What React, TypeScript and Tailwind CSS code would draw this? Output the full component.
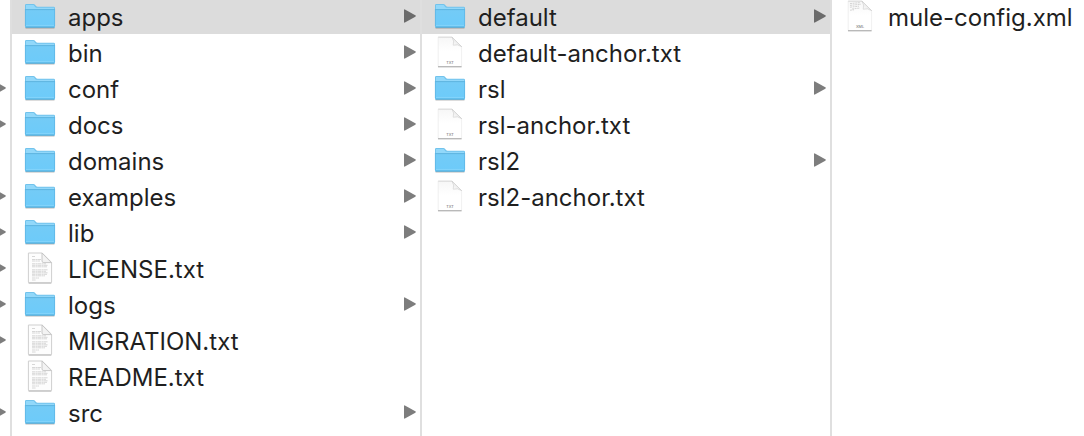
import React from "react";
import clsx from "clsx";

type Kind = "folder" | "page" | "txt" | "xml";
type Entry = { name: string; kind: Kind; selected?: boolean };

const parentArrows = [false, false, true, true, false, true, true, true, true, true, false, true];

const root: Entry[] = [
  { name: "apps", kind: "folder", selected: true },
  { name: "bin", kind: "folder" },
  { name: "conf", kind: "folder" },
  { name: "docs", kind: "folder" },
  { name: "domains", kind: "folder" },
  { name: "examples", kind: "folder" },
  { name: "lib", kind: "folder" },
  { name: "LICENSE.txt", kind: "page" },
  { name: "logs", kind: "folder" },
  { name: "MIGRATION.txt", kind: "page" },
  { name: "README.txt", kind: "page" },
  { name: "src", kind: "folder" },
];

const apps: Entry[] = [
  { name: "default", kind: "folder", selected: true },
  { name: "default-anchor.txt", kind: "txt" },
  { name: "rsl", kind: "folder" },
  { name: "rsl-anchor.txt", kind: "txt" },
  { name: "rsl2", kind: "folder" },
  { name: "rsl2-anchor.txt", kind: "txt" },
];

const defaultApp: Entry[] = [{ name: "mule-config.xml", kind: "xml" }];

function Defs() {
  return (
    <svg className="absolute size-0" aria-hidden="true">
      <defs>
        <linearGradient id="folder-front" x1="0" y1="0" x2="0" y2="1">
          <stop offset="0" stopColor="#74cbf6" />
          <stop offset="1" stopColor="#6ccbfa" />
        </linearGradient>
        <linearGradient id="paper" x1="0" y1="0" x2="0" y2="1">
          <stop offset="0" stopColor="#f7f7f7" />
          <stop offset="0.5" stopColor="#ffffff" />
          <stop offset="1" stopColor="#ffffff" />
        </linearGradient>
        <linearGradient id="curl" x1="0" y1="1" x2="1" y2="0">
          <stop offset="0" stopColor="#ffffff" />
          <stop offset="1" stopColor="#dcdcdc" />
        </linearGradient>
      </defs>
    </svg>
  );
}

function FolderIcon() {
  return (
    <svg viewBox="0 0 32 32" className="size-8" aria-hidden="true">
      <path d="M1.5 28h29" stroke="#000" strokeOpacity="0.2" strokeWidth="1.4" />
      <path
        d="M1 5.2Q1 4 2.2 4H9.4Q10.4 4 11 4.8L12 6.1Q12.6 6.8 13.6 6.8H29.8Q31 6.8 31 8V25H1Z"
        fill="#72c3ec"
      />
      <path d="M2 5H9.6L11.4 7.2Q12 7.8 13 7.8H30V9.4H2Z" fill="#92d8fa" />
      <path d="M1 9.4H31V26.2Q31 27.6 29.8 27.6H2.2Q1 27.6 1 26.2Z" fill="url(#folder-front)" />
      <path d="M1 9.6H31" stroke="#57aedb" strokeWidth="0.8" />
      <path d="M1.4 9V26M30.6 9V26" stroke="#5db5e3" strokeWidth="0.8" />
      <path d="M2 25.4H30" stroke="#8ad6fb" strokeWidth="0.8" />
      <path d="M1.4 27.2H30.6" stroke="#4a9fca" strokeWidth="0.9" />
    </svg>
  );
}

function PageIcon() {
  return (
    <svg viewBox="0 0 32 32" className="size-8" aria-hidden="true">
      <path d="M4.5 1H18.2L27.6 10.4V30Q27.6 30.8 26.8 30.8H5.2Q4.4 30.8 4.4 30V1Z" fill="#fdfdfd" stroke="#cfcfcf" />
      <path d="M4.6 31.1H27.4" stroke="#b5b5b5" strokeWidth="0.9" />
      <path d="M18 1V9Q18 10.6 19.8 10.6H27.4Z" fill="#f3f3f3" stroke="#c3c3c3" strokeWidth="0.9" />
      <path
        d="M8 4.5h3M8 7.5h9M8 9h8M8 11.8h14M8 13.3h16M8 14.8h15M8 17.8h16M8 19.3h14M8 20.8h16M8 22.3h15M8 23.8h13M8 26h7M8 28h4"
        stroke="#cdcdcd"
        strokeWidth="0.8"
        strokeDasharray="3.2 0.4 2.1 0.3"
      />
    </svg>
  );
}

function TypedIcon({ label }: { label: "TXT" | "XML" }) {
  return (
    <svg viewBox="0 0 32 32" className="size-8" aria-hidden="true">
      <path d="M4.2 1H18L27.6 10.6V30.6H4.2Z" fill="url(#paper)" stroke="#ececec" strokeWidth="0.8" />
      <path d="M4.2 1.2H18L27.6 10.6" fill="none" stroke="#d0d0d0" strokeWidth="0.7" />
      <path d="M18 1.2Q20.6 5 19.2 9.2Q23.6 7.8 27.6 10.6Z" fill="url(#curl)" stroke="#cdcdcd" strokeWidth="0.6" />
      <path d="M4 30.8H27.6" stroke="#989898" strokeWidth="0.9" />
      {label === "XML" && (
        <path
          d="M6 3.6l10-1M6 5.4l11-1.2M6 7.2l9-1M8 9l8-1M6 10.2l4-.4"
          stroke="#c4c4c4"
          strokeWidth="0.7"
          strokeDasharray="2 0.6"
        />
      )}
      <text
        x="16"
        y="28"
        textAnchor="middle"
        className="fill-[#666666] font-['Liberation_Sans',sans-serif] text-[4px]"
      >
        {label}
      </text>
    </svg>
  );
}

function EntryIcon({ kind }: { kind: Kind }) {
  if (kind === "folder") return <FolderIcon />;
  if (kind === "page") return <PageIcon />;
  return <TypedIcon label={kind === "txt" ? "TXT" : "XML"} />;
}

function Arrow({ dark }: { dark?: boolean }) {
  return (
    <svg
      viewBox="0 0 12 14"
      className={clsx("h-3.5 w-3 shrink-0", dark ? "fill-[#6b6b6b]" : "fill-[#7d7d7d]")}
      aria-hidden="true"
    >
      <path d="M0 0.9Q0 0 0.9 0.4L11.3 6.3Q12.3 7 11.3 7.7L0.9 13.6Q0 14 0 13.1Z" />
    </svg>
  );
}

function Column({ label, entries, last }: { label: string; entries: Entry[]; last?: boolean }) {
  return (
    <ul aria-label={label} className={clsx("min-w-0", !last && "border-r-2 border-[#dfdfdf]")}>
      {entries.map((e) => (
        <li key={e.name}>
          <button
            type="button"
            aria-pressed={!!e.selected}
            className={clsx(
              "flex h-9 w-full items-center gap-3 pr-1 pl-3 text-left",
              e.selected && "bg-[#dcdcdc]",
            )}
          >
            <span className="shrink-0">
              <EntryIcon kind={e.kind} />
            </span>
            <span className="grow pt-1 whitespace-nowrap">{e.name}</span>
            {e.kind === "folder" && <Arrow dark={e.selected} />}
          </button>
        </li>
      ))}
    </ul>
  );
}

export default function App() {
  return (
    <main className="min-h-screen overflow-hidden bg-white font-['Inter',sans-serif] text-2xl text-[#1f1f1f]">
      <Defs />
      <div className="-mt-0.5 grid min-h-[calc(100vh+2px)] grid-cols-[12px_minmax(0,410fr)_minmax(0,410fr)_minmax(0,252fr)]">
        <ul aria-label="Parent folder" className="overflow-hidden border-r-2 border-[#dfdfdf]">
          {parentArrows.map((shown, i) => (
            <li key={i} className="flex h-9 items-center justify-end pr-1">
              {shown && <Arrow />}
            </li>
          ))}
        </ul>
        <Column label="Root" entries={root} />
        <Column label="apps" entries={apps} />
        <Column label="default" entries={defaultApp} last />
      </div>
    </main>
  );
}
